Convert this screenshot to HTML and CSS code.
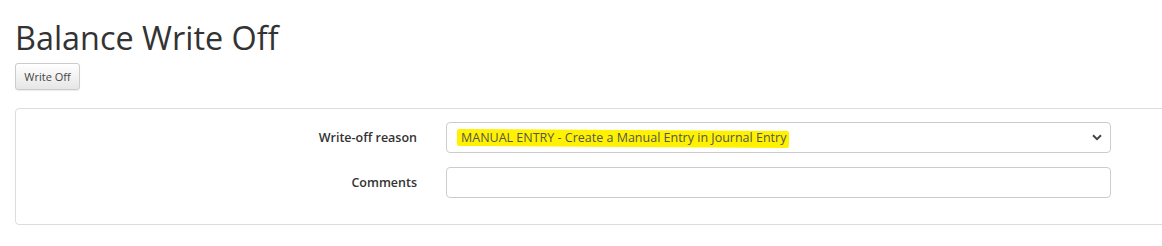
FILE: index.html
```html
<!DOCTYPE html>
<html>
<head>
<meta charset="utf-8">
<link rel="stylesheet" href="styles.css">
</head>
<body>
<h1 class="title">Balance Write Off</h1>
<button class="btn">Write Off</button>
<div class="panel">
  <div class="form">
    <label class="label">Write-off reason</label>
    <div class="control select">
      <span class="value"><span class="hl"></span><span class="txt">MANUAL ENTRY - Create a Manual Entry in Journal Entry</span></span>
      <svg class="chev" width="10" height="7" viewBox="0 0 10 7"><path d="M1 1.2 L5 5.2 L9 1.2" fill="none" stroke="#444" stroke-width="2"/></svg>
    </div>
    <label class="label">Comments</label>
    <div class="control"></div>
  </div>
</div>
</body>
</html>
```

FILE: styles.css
```css
html, body { margin: 0; padding: 0; background: #fff; overflow: hidden; }
body {
  font-family: "Open Sans", "Liberation Sans", sans-serif;
  color: #333;
  padding: 0 0 0 15px;
}
.title {
  margin: 0;
  padding-top: 15px;
  font-size: 32.4px;
  font-weight: 400;
  line-height: 44px;
  height: 48px;
  color: #333;
  letter-spacing: 0;
}
.btn {
  display: block;
  width: 65px;
  height: 27px;
  padding: 0;
  font-family: "Open Sans", "Liberation Sans", sans-serif;
  font-size: 11px;
  color: #444;
  background: linear-gradient(#fff, #e6e6e6);
  border: 1px solid #ccc;
  border-radius: 3px;
  box-shadow: 0 1px 1px rgba(0,0,0,0.08);
}
.panel {
  margin-top: 18px;
  margin-right: -40px;
  border: 1px solid #ddd;
  border-radius: 4px;
  padding: 13px 0 27px 0;
  height: 75px;
}
.form {
  display: grid;
  grid-template-columns: 401px 665px;
  column-gap: 29px;
  row-gap: 14px;
}
.label {
  text-align: right;
  font-size: 12.5px;
  font-weight: 600;
  color: #333;
  line-height: 31px;
  height: 31px;
}
.control {
  height: 29px;
  border: 1px solid #ccc;
  border-radius: 4px;
  position: relative;
}
.select {
  display: flex;
  align-items: center;
  justify-content: space-between;
  padding: 0 8px 0 14px;
}
.value {
  position: relative;
  font-size: 12.5px;
  color: #555;
}
.txt { position: relative; }
.hl {
  position: absolute;
  left: -4px;
  right: -3px;
  top: 1px;
  bottom: -1px;
  background: #fff200;
  transform: rotate(0.35deg);
  border-radius: 2px;
}
.chev { display: block; }
```
